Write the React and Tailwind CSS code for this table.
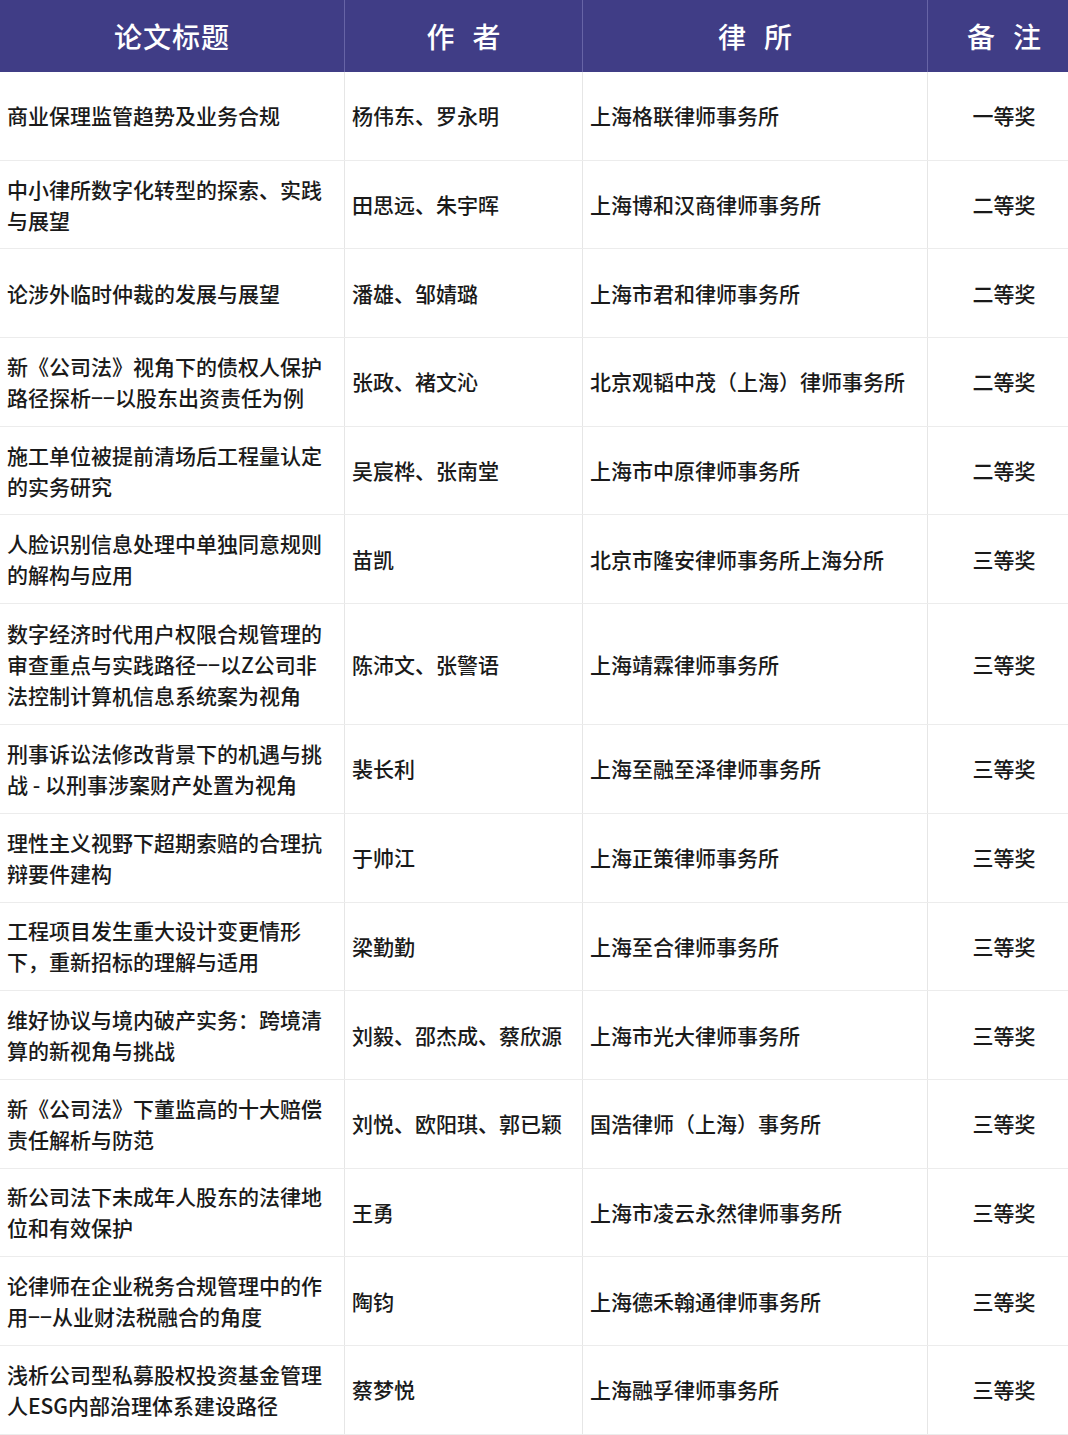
const rows = [
  { title: ['商业保理监管趋势及业务合规'], author: '杨伟东、罗永明', firm: '上海格联律师事务所', note: '一等奖' },
  { title: ['中小律所数字化转型的探索、实践', '与展望'], author: '田思远、朱宇晖', firm: '上海博和汉商律师事务所', note: '二等奖' },
  { title: ['论涉外临时仲裁的发展与展望'], author: '潘雄、邹婧璐', firm: '上海市君和律师事务所', note: '二等奖' },
  { title: ['新《公司法》视角下的债权人保护', '路径探析−−以股东出资责任为例'], author: '张政、褚文沁', firm: '北京观韬中茂（上海）律师事务所', note: '二等奖' },
  { title: ['施工单位被提前清场后工程量认定', '的实务研究'], author: '吴宸桦、张南堂', firm: '上海市中原律师事务所', note: '二等奖' },
  { title: ['人脸识别信息处理中单独同意规则', '的解构与应用'], author: '苗凯', firm: '北京市隆安律师事务所上海分所', note: '三等奖' },
  { title: ['数字经济时代用户权限合规管理的', '审查重点与实践路径−−以Z公司非', '法控制计算机信息系统案为视角'], author: '陈沛文、张警语', firm: '上海靖霖律师事务所', note: '三等奖' },
  { title: ['刑事诉讼法修改背景下的机遇与挑', '战 - 以刑事涉案财产处置为视角'], author: '裴长利', firm: '上海至融至泽律师事务所', note: '三等奖' },
  { title: ['理性主义视野下超期索赔的合理抗', '辩要件建构'], author: '于帅江', firm: '上海正策律师事务所', note: '三等奖' },
  { title: ['工程项目发生重大设计变更情形', '下，重新招标的理解与适用'], author: '梁勤勤', firm: '上海至合律师事务所', note: '三等奖' },
  { title: ['维好协议与境内破产实务：跨境清', '算的新视角与挑战'], author: '刘毅、邵杰成、蔡欣源', firm: '上海市光大律师事务所', note: '三等奖' },
  { title: ['新《公司法》下董监高的十大赔偿', '责任解析与防范'], author: '刘悦、欧阳琪、郭已颖', firm: '国浩律师（上海）事务所', note: '三等奖' },
  { title: ['新公司法下未成年人股东的法律地', '位和有效保护'], author: '王勇', firm: '上海市凌云永然律师事务所', note: '三等奖' },
  { title: ['论律师在企业税务合规管理中的作', '用−−从业财法税融合的角度'], author: '陶钧', firm: '上海德禾翰通律师事务所', note: '三等奖' },
  { title: ['浅析公司型私募股权投资基金管理', '人ESG内部治理体系建设路径'], author: '蔡梦悦', firm: '上海融孚律师事务所', note: '三等奖' },
];

function HeaderCell({ chars, spaced, className = '' }) {
  return (
    <div className={`flex items-center justify-center h-full border-r border-[#6764a6] ${className}`}>
      {spaced ? (
        <div className="flex gap-[18px]">
          {chars.map((c) => (
            <span key={c}>{c}</span>
          ))}
        </div>
      ) : (
        <span className="tracking-[1px]">{chars.join('')}</span>
      )}
    </div>
  );
}

export default function App() {
  return (
    <div
      className="w-[1068px] bg-white text-[#1a1a1a] font-medium"
      style={{ fontFamily: '"Noto Sans CJK SC", "Noto Sans", sans-serif' }}
    >
      {/* Header */}
      <div className="grid grid-cols-[345px_238px_345px_140px] h-[72px] bg-[#403d86] text-white text-[28px]">
        <HeaderCell chars={['论', '文', '标', '题']} />
        <HeaderCell chars={['作', '者']} spaced />
        <HeaderCell chars={['律', '所']} spaced />
        <HeaderCell chars={['备', '注']} spaced className="border-r-0 pl-[12px]" />
      </div>

      {/* Body */}
      {rows.map((r, i) => (
        <div
          key={i}
          className={`grid grid-cols-[345px_238px_345px_140px] border-b border-[#ececec] text-[21px] leading-[31px] ${
            r.title.length > 2 ? 'h-[121px]' : 'h-[88.7px]'
          }`}
        >
          <div className="flex flex-col justify-center px-[7px] border-r border-[#e6e6e6] whitespace-nowrap">
            {r.title.map((line, j) => (
              <span key={j}>{line}</span>
            ))}
          </div>
          <div className="flex items-center px-[7px] border-r border-[#e6e6e6] whitespace-nowrap">{r.author}</div>
          <div className="flex items-center px-[7px] border-r border-[#e6e6e6] whitespace-nowrap">{r.firm}</div>
          <div className="flex items-center justify-center pl-[12px]">{r.note}</div>
        </div>
      ))}
    </div>
  );
}
